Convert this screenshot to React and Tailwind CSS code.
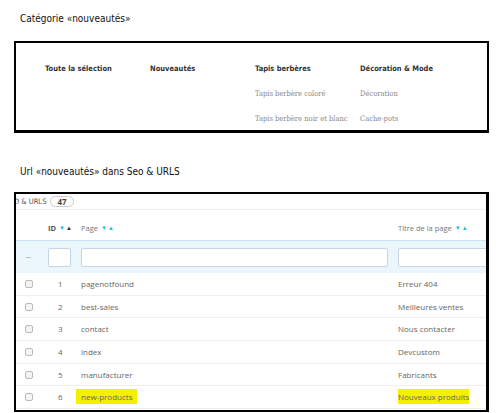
import React from 'react';

const menu = [
  { title: 'Toute la sélection', items: [] },
  { title: 'Nouveautés', items: [] },
  { title: 'Tapis berbères', items: ['Tapis berbère coloré', 'Tapis berbère noir et blanc'] },
  { title: 'Décoration & Mode', items: ['Décoration', 'Cache-pots'] },
];

const rows = [
  { id: 1, page: 'pagenotfound', title: 'Erreur 404' },
  { id: 2, page: 'best-sales', title: 'Meilleures ventes' },
  { id: 3, page: 'contact', title: 'Nous contacter' },
  { id: 4, page: 'index', title: 'Devcustom' },
  { id: 5, page: 'manufacturer', title: 'Fabricants' },
  { id: 6, page: 'new-products', title: 'Nouveaux produits', hl: true },
];

function Sort({ dark }) {
  return (
    <span className="ml-[3px] inline-flex items-center gap-[1px] text-[6px] leading-none">
      <span className="text-[#25b9d7]">▼</span>
      <span className={dark ? 'text-[#333]' : 'text-[#25b9d7]'}>▲</span>
    </span>
  );
}

const cond = { fontFamily: '"DejaVu Sans Condensed", "Liberation Sans", sans-serif' };

export default function App() {
  return (
    <div className="w-[502px] h-[413px] bg-white overflow-hidden relative" style={{ fontFamily: '"Open Sans", sans-serif' }}>
      <div className="pl-[20px] pt-[11px] h-[41px] text-[10px] text-[#111]" style={cond}>
        Catégorie «nouveautés»
      </div>

      <div className="ml-[14px] w-[475px] h-[92px] border-2 border-black border-b-[3px] pt-[20px] pl-[29px] flex" style={cond}>
        {menu.map(m => (
          <div key={m.title} className="w-[105px] shrink-0">
            <div className="text-[7.5px] font-bold text-[#333] h-[12px] leading-[12px] whitespace-nowrap">{m.title}</div>
            <div className="mt-[13px] flex flex-col gap-[13px]">
              {m.items.map(i => (
                <div key={i} className="text-[7.5px] text-[#888] h-[12px] leading-[12px] whitespace-nowrap" style={{ fontFamily: '"DejaVu Serif Condensed", "Liberation Serif", serif' }}>{i}</div>
              ))}
            </div>
          </div>
        ))}
      </div>

      <div className="pl-[20px] pt-[31px] h-[59px] text-[10px] text-[#111]" style={cond}>
        Url «nouveautés» dans Seo &amp; URLS
      </div>

      <div className="ml-[14px] w-[475px] h-[220px] border-2 border-black border-r-[3px] overflow-hidden">
        <div className="h-[16px] border-b border-[#eee] flex items-center -ml-[2px] text-[7.5px] text-[#555]">
          <span className="uppercase" style={cond}>D &amp; URLS</span>
          <span className="ml-[4px] px-[6px] h-[11px] leading-[10px] rounded-full border border-[#ccc] font-bold text-[#444] text-[8px]">47</span>
        </div>
        <div className="h-[30px] flex items-end pb-[6px] text-[7.5px] text-[#777]">
          <div className="w-[32px] shrink-0" />
          <div className="w-[33px] shrink-0 font-bold text-[#555] flex items-center">ID<Sort dark /></div>
          <div className="w-[317px] shrink-0 flex items-center">Page<Sort /></div>
          <div className="flex items-center whitespace-nowrap">Titre de la page<Sort /></div>
        </div>
        <div className="h-[33px] bg-[#eaf5fc] border-t border-[#cde3f3] flex items-center text-[7.5px] text-[#777]">
          <div className="w-[32px] shrink-0 pl-[10px]">--</div>
          <div className="w-[33px] shrink-0"><div className="w-[23px] h-[19px] bg-white border border-[#c7d6e0] rounded-[2px]" /></div>
          <div className="w-[317px] shrink-0"><div className="w-[307px] h-[19px] bg-white border border-[#c7d6e0] rounded-[2px]" /></div>
          <div className="flex-1 min-w-0"><div className="w-[120px] h-[19px] bg-white border border-[#c7d6e0] rounded-[2px]" /></div>
        </div>
        {rows.map(r => (
          <div key={r.id} className="h-[22.7px] border-b border-[#eee] flex items-center text-[8px] text-[#666]">
            <div className="w-[32px] shrink-0 pl-[9px]">
              <div className="w-[8px] h-[8px] rounded-[2px] border border-[#bbb] bg-[#f4f4f4]" />
            </div>
            <div className="w-[33px] shrink-0 pl-[10px]">{r.id}</div>
            <div className="w-[317px] shrink-0">
              <span className={r.hl ? 'bg-[#f3f000] -ml-[5px] px-[5px] py-[2px]' : ''}>{r.page}</span>
            </div>
            <div className="whitespace-nowrap">
              <span className={r.hl ? 'bg-[#f3f000] py-[2px]' : ''}>{r.title}</span>
            </div>
          </div>
        ))}
      </div>
    </div>
  );
}
